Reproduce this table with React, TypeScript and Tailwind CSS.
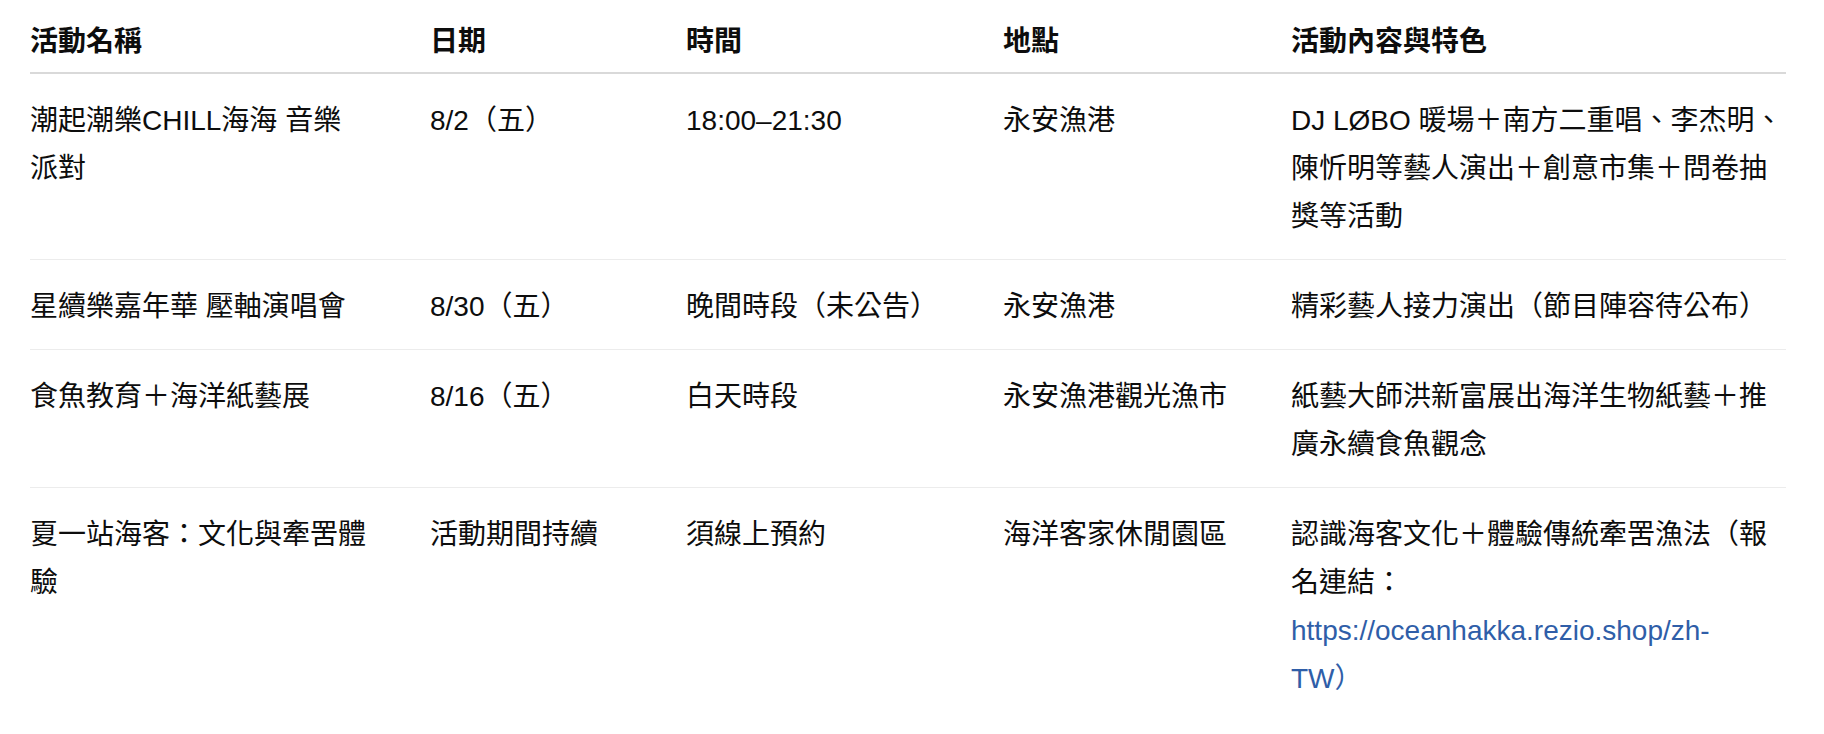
import React from 'react';

interface Row {
  name: string;
  date: string;
  time: string;
  place: string;
  detail: React.ReactNode;
}

const ROWS: Row[] = [
  {
    name: '潮起潮樂CHILL海海 音樂\n派對',
    date: '8/2（五）',
    time: '18:00–21:30',
    place: '永安漁港',
    detail: 'DJ LØBO 暖場＋南方二重唱、李杰明、\n陳忻明等藝人演出＋創意市集＋問卷抽\n獎等活動',
  },
  {
    name: '星續樂嘉年華 壓軸演唱會',
    date: '8/30（五）',
    time: '晚間時段（未公告）',
    place: '永安漁港',
    detail: '精彩藝人接力演出（節目陣容待公布）',
  },
  {
    name: '食魚教育＋海洋紙藝展',
    date: '8/16（五）',
    time: '白天時段',
    place: '永安漁港觀光漁市',
    detail: '紙藝大師洪新富展出海洋生物紙藝＋推\n廣永續食魚觀念',
  },
  {
    name: '夏一站海客：文化與牽罟體\n驗',
    date: '活動期間持續',
    time: '須線上預約',
    place: '海洋客家休閒園區',
    detail: (
      <>
        <span className="block">認識海客文化＋體驗傳統牽罟漁法（報</span>
        <span className="block">名連結：</span>
        <a href="#" className="block text-[#2f5ea8]">https://oceanhakka.rezio.shop/zh-</a>
        <span className="block text-[#2f5ea8]">TW）</span>
      </>
    ),
  },
];

const HEADERS = ['活動名稱', '日期', '時間', '地點', '活動內容與特色'];

export default function App() {
  return (
    <div className="min-h-screen bg-white pt-2 pl-[30px] font-['Liberation_Sans','Noto_Sans_CJK_TC',sans-serif] text-[28px] leading-[48px] text-[#0d0d0d]">
      <table className="w-[1756px] table-fixed">
        <colgroup>
          <col className="w-[400px]" />
          <col className="w-[256px]" />
          <col className="w-[317px]" />
          <col className="w-[288px]" />
          <col className="w-[495px]" />
        </colgroup>
        <thead>
          <tr className="border-b-2 border-[#d9d9d9]">
            {HEADERS.map((h) => (
              <th key={h} className="pt-[10px] pb-[6px] text-left align-top font-semibold">
                {h}
              </th>
            ))}
          </tr>
        </thead>
        <tbody>
          {ROWS.map((r, i) => (
            <tr key={r.name} className={i < ROWS.length - 1 ? 'border-b border-[#ececec]' : ''}>
              <td className="pt-[23px] pb-[17px] align-top whitespace-pre">{r.name}</td>
              <td className="pt-[23px] pb-[17px] align-top whitespace-pre">{r.date}</td>
              <td className="pt-[23px] pb-[17px] align-top whitespace-pre">{r.time}</td>
              <td className="pt-[23px] pb-[17px] align-top whitespace-pre">{r.place}</td>
              <td className="pt-[23px] pb-[18px] align-top whitespace-pre">{r.detail}</td>
            </tr>
          ))}
        </tbody>
      </table>
    </div>
  );
}
